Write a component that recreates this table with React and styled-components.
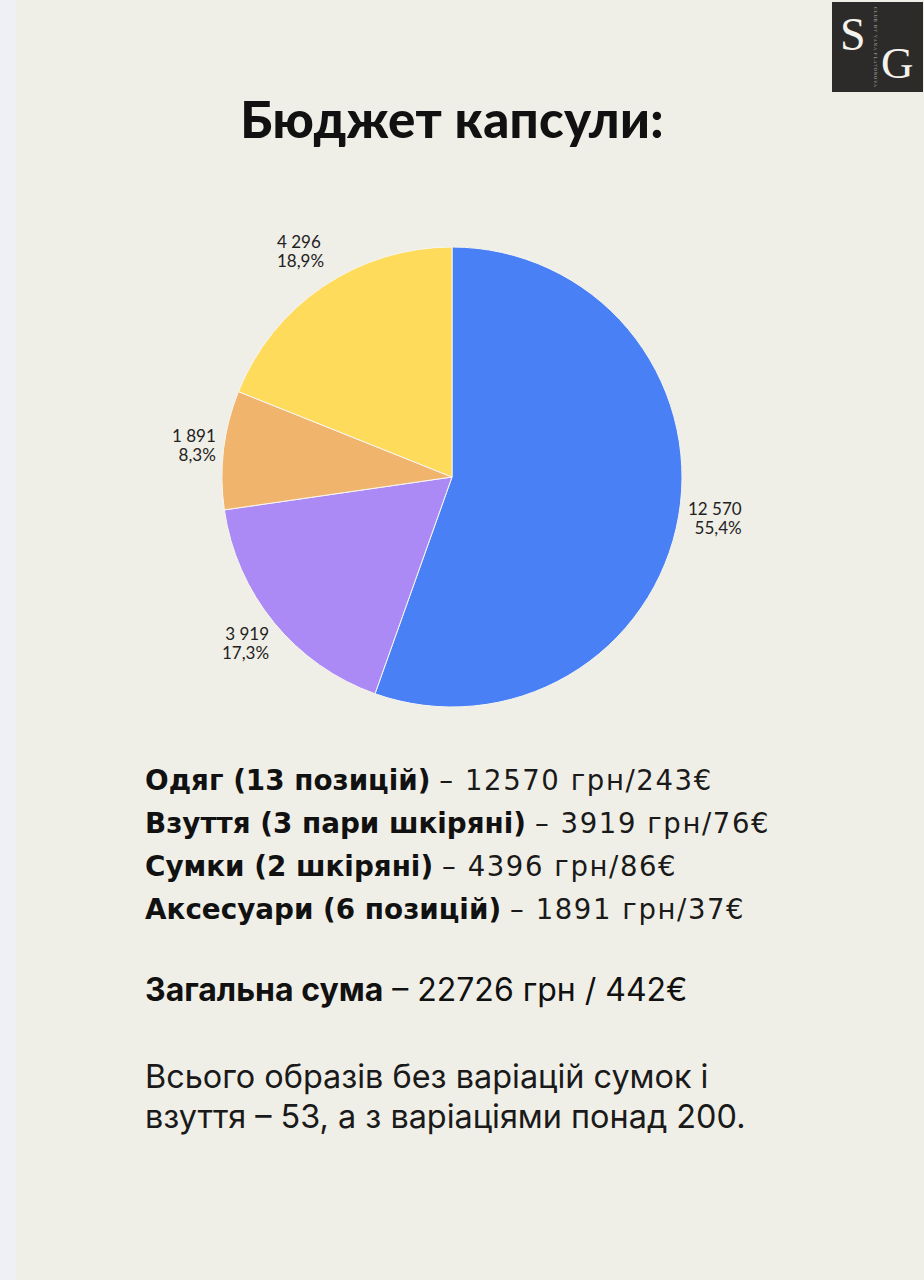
import React from 'react';
import styled, { createGlobalStyle } from 'styled-components';

const GlobalStyle = createGlobalStyle`
  html, body {
    margin: 0;
    padding: 0;
    background: #eef0f5;
  }
  * {
    box-sizing: border-box;
  }
`;

const colors = {
  sheet: '#f0efe7',
  strip: '#eef0f5',
  ink: '#111111',
  blue: '#4a80f6',
  purple: '#ab8af6',
  orange: '#f1b46c',
  yellow: '#fedb5b',
  logo: '#2c2b29'
};

const geometric = `'Lato', 'Noto Sans', sans-serif`;
const wide = `'DejaVu Sans', 'Noto Sans', sans-serif`;
const grotesk = `'Inter', 'Roboto', sans-serif`;

const Page = styled.div`
  display: flex;
  width: 924px;
  height: 1280px;
  overflow: hidden;
`;

const Strip = styled.div`
  width: 16px;
  flex: none;
  background: ${colors.strip};
`;

const Sheet = styled.main`
  position: relative;
  flex: 1;
  background: ${colors.sheet};
  padding: 0 36px 0 0;
  display: flex;
  flex-direction: column;
`;

const Logo = styled.svg`
  position: absolute;
  top: 2px;
  right: 1px;
  width: 91px;
  height: 90px;
`;

const Title = styled.h1`
  margin: 90px 0 0;
  text-align: center;
  font-family: ${geometric};
  font-weight: 900;
  font-size: 51px;
  line-height: 58px;
  color: ${colors.ink};
  letter-spacing: 0.3px;
`;

const Chart = styled.div`
  position: relative;
  width: 600px;
  height: 480px;
  margin: 84px auto 0;
`;

const Pie = styled.svg`
  position: absolute;
  left: 70px;
  top: 15px;
  width: 460px;
  height: 460px;
`;

const SliceLabel = styled.div`
  position: absolute;
  font-family: ${geometric};
  font-size: 17px;
  line-height: 19px;
  color: #222;
  text-align: ${(p) => p.$align || 'left'};
`;

const Breakdown = styled.section`
  margin: 47px 0 0 129px;
  display: flex;
  flex-direction: column;
`;

const Line = styled.div`
  font-family: ${wide};
  font-size: 27.8px;
  line-height: 43px;
  color: ${colors.ink};
  white-space: nowrap;
`;

const Strong = styled.b`
  font-weight: 700;
`;

const Price = styled.span`
  font-size: 27.5px;
  letter-spacing: 1.6px;
  color: #1a1a1a;
`;

const Total = styled.div`
  margin-top: 39px;
  font-family: ${grotesk};
  font-size: 32px;
  line-height: 40px;
  color: ${colors.ink};

  b {
    font-weight: 700;
  }
`;

const Note = styled.p`
  margin: 47px 0 0;
  width: 610px;
  font-family: ${grotesk};
  font-size: 32.4px;
  line-height: 40px;
  color: #1a1a1a;
`;

const slices = [
  { value: 12570, color: colors.blue },
  { value: 3919, color: colors.purple },
  { value: 1891, color: colors.orange },
  { value: 4296, color: colors.yellow }
];

const labels = [
  { lines: ['4 296', '18,9%'], left: 125, top: 0 },
  { lines: ['1 891', '8,3%'], left: 20, top: 194, align: 'right' },
  { lines: ['3 919', '17,3%'], left: 70, top: 392, align: 'right' },
  { lines: ['12 570', '55,4%'], left: 536, top: 267, align: 'right' }
];

const items = [
  { name: 'Одяг (13 позицій)', price: '12570 грн/243€' },
  { name: 'Взуття (3 пари шкіряні)', price: '3919 грн/76€' },
  { name: 'Сумки (2 шкіряні)', price: '4396 грн/86€' },
  { name: 'Аксесуари (6 позицій)', price: '1891 грн/37€' }
];

function point(cx, cy, r, turn) {
  const a = turn * Math.PI * 2;
  return [cx + r * Math.sin(a), cy - r * Math.cos(a)];
}

function PieChart() {
  const total = slices.reduce((s, x) => s + x.value, 0);
  let acc = 0;
  return (
    <Pie viewBox="0 0 460 460">
      {slices.map((s, i) => {
        const start = acc / total;
        acc += s.value;
        const end = acc / total;
        const [x1, y1] = point(230, 230, 230, start);
        const [x2, y2] = point(230, 230, 230, end);
        const large = end - start > 0.5 ? 1 : 0;
        return (
          <path
            key={i}
            d={`M230 230 L${x1} ${y1} A230 230 0 ${large} 1 ${x2} ${y2} Z`}
            fill={s.color}
            stroke="#f7f6f0"
            strokeWidth="1"
          />
        );
      })}
    </Pie>
  );
}

function BrandMark() {
  return (
    <Logo viewBox="0 0 91 90">
      <rect width="91" height="90" fill={colors.logo} />
      <text
        x="8"
        y="48"
        fill="#f4f2ec"
        fontFamily="'Liberation Serif', serif"
        fontSize="46"
      >
        S
      </text>
      <text
        x="49"
        y="76"
        fill="#f4f2ec"
        fontFamily="'Liberation Serif', serif"
        fontSize="45"
      >
        G
      </text>
      <text
        x="42"
        y="5"
        fill="#bdbab3"
        fontFamily="'Liberation Serif', serif"
        fontSize="4.5"
        textLength="80"
        lengthAdjust="spacing"
        transform="rotate(90 42 5)"
      >
        CLUB BY YANA PLATONOVA
      </text>
    </Logo>
  );
}

export default function App() {
  return (
    <>
      <GlobalStyle />
      <Page>
        <Strip />
        <Sheet>
          <BrandMark />
          <Title>Бюджет капсули:</Title>
          <Chart>
            <PieChart />
            {labels.map((l) => (
              <SliceLabel
                key={l.lines[0]}
                $align={l.align}
                style={{ left: l.left, top: l.top }}
              >
                {l.lines[0]}
                <br />
                {l.lines[1]}
              </SliceLabel>
            ))}
          </Chart>
          <Breakdown>
            {items.map((it) => (
              <Line key={it.name}>
                <Strong>{it.name}</Strong> <Price>– {it.price}</Price>
              </Line>
            ))}
            <Total>
              <b>Загальна сума</b> – 22726 грн / 442€
            </Total>
            <Note>
              Всього образів без варіацій сумок і взуття – 53, а з варіаціями
              понад 200.
            </Note>
          </Breakdown>
        </Sheet>
      </Page>
    </>
  );
}
